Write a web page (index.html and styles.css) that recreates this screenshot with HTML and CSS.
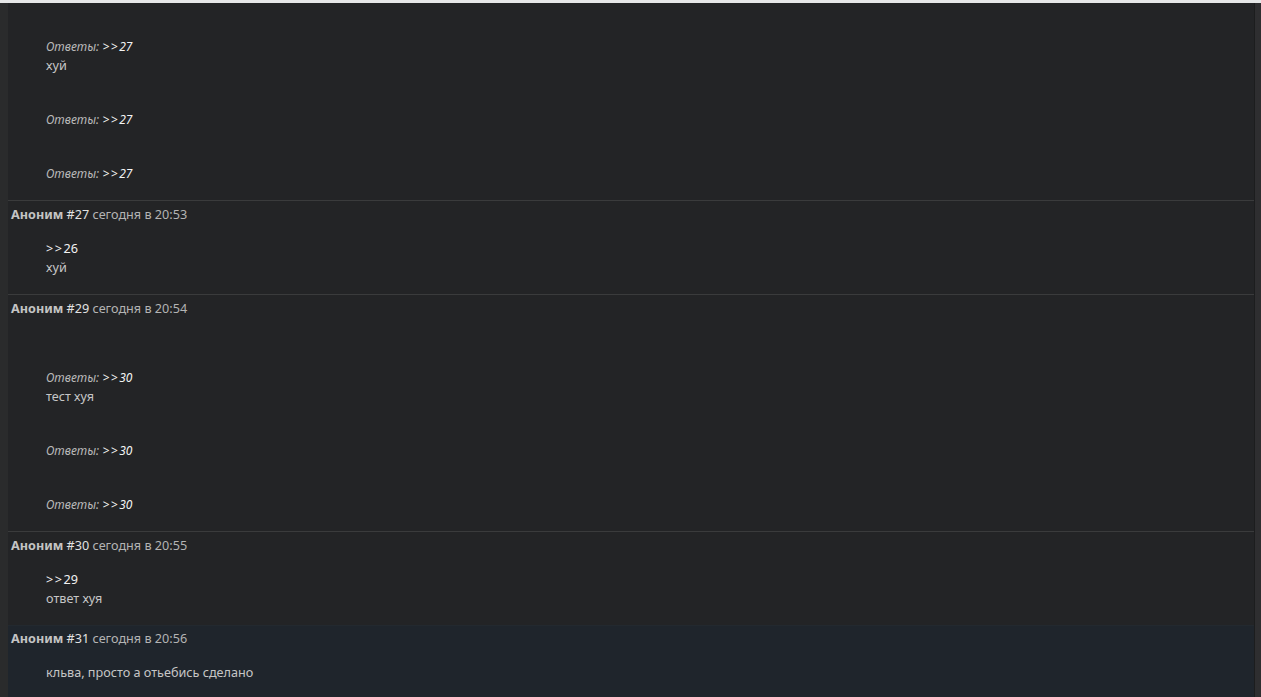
FILE: index.html
```html
<!DOCTYPE html>
<html lang="ru">
<head>
<meta charset="utf-8">
<title>Тред</title>
<link rel="stylesheet" href="styles.css">
</head>
<body>
<div class="topbar"></div>
<div class="frame">
  <div class="gutter gutter--left"></div>
  <main class="thread">
    <section class="post post--cont">
      <div class="post-body">
        <div class="reply">
          <div class="reply-refs"><span class="refs-label">Ответы:</span> <a class="ref"><span class="gt">&gt;&gt;</span>27</a></div>
          <div class="reply-text">хуй</div>
        </div>
        <div class="reply">
          <div class="reply-refs"><span class="refs-label">Ответы:</span> <a class="ref"><span class="gt">&gt;&gt;</span>27</a></div>
        </div>
        <div class="reply">
          <div class="reply-refs"><span class="refs-label">Ответы:</span> <a class="ref"><span class="gt">&gt;&gt;</span>27</a></div>
        </div>
      </div>
    </section>

    <section class="post">
      <header class="post-head"><span class="author">Аноним</span> <span class="num">#27</span> <span class="date">сегодня в 20:53</span></header>
      <div class="post-body">
        <div class="quote-link"><span class="gt">&gt;&gt;</span>26</div>
        <div class="text">хуй</div>
      </div>
    </section>

    <section class="post">
      <header class="post-head"><span class="author">Аноним</span> <span class="num">#29</span> <span class="date">сегодня в 20:54</span></header>
      <div class="post-body">
        <div class="reply">
          <div class="reply-refs"><span class="refs-label">Ответы:</span> <a class="ref"><span class="gt">&gt;&gt;</span>30</a></div>
          <div class="reply-text">тест хуя</div>
        </div>
        <div class="reply">
          <div class="reply-refs"><span class="refs-label">Ответы:</span> <a class="ref"><span class="gt">&gt;&gt;</span>30</a></div>
        </div>
        <div class="reply">
          <div class="reply-refs"><span class="refs-label">Ответы:</span> <a class="ref"><span class="gt">&gt;&gt;</span>30</a></div>
        </div>
      </div>
    </section>

    <section class="post">
      <header class="post-head"><span class="author">Аноним</span> <span class="num">#30</span> <span class="date">сегодня в 20:55</span></header>
      <div class="post-body">
        <div class="quote-link"><span class="gt">&gt;&gt;</span>29</div>
        <div class="text">ответ хуя</div>
      </div>
    </section>

    <section class="post post--highlight">
      <header class="post-head"><span class="author">Аноним</span> <span class="num">#31</span> <span class="date">сегодня в 20:56</span></header>
      <div class="post-body">
        <div class="text">кльва, просто а отьебись сделано</div>
      </div>
    </section>
  </main>
  <div class="gutter gutter--right"></div>
</div>
</body>
</html>
```
FILE: styles.css
```css
html, body {
  margin: 0;
  padding: 0;
  height: 697px;
  overflow: hidden;
  background: #232426;
}

body {
  font-family: "Noto Sans", "Open Sans", sans-serif;
  font-size: 12.65px;
  line-height: 19px;
  color: #c6c6c6;
}

.topbar {
  height: 3px;
  background: #e6e7e8;
}

.frame {
  display: flex;
  height: 694px;
  overflow: hidden;
}

.gutter {
  flex: 0 0 auto;
}

.gutter--left {
  width: 8px;
  background: #2a2b2c;
}

.gutter--right {
  width: 6px;
  background: #2e2e30;
  border-left: 1px solid #1c1d1e;
}

.thread {
  flex: 1 1 auto;
  min-width: 0;
  display: flex;
  flex-direction: column;
}

.post {
  border-top: 1px solid #3a3b3c;
  padding: 4px 0 17px;
}

.post--cont {
  border-top: 0;
  padding-top: 0;
}

.post--cont .reply:first-child {
  margin-top: 34px;
}

.post--highlight {
  flex: 1 1 auto;
  background: #1f252c;
  border-top-color: #23292f;
  padding-top: 3px;
  padding-bottom: 0;
}

.post-head {
  padding-left: 3px;
}

.author {
  font-weight: 700;
  color: #c4c4c4;
}

.num {
  color: #e2e2e2;
}

.date {
  color: #b4b4b4;
}

.post-body {
  padding: 15px 0 0 38px;
}

.post--cont .post-body {
  padding-top: 0;
}

.reply {
  margin-top: 35px;
}

.refs-label {
  font-style: italic;
  font-size: 12px;
  color: #b9b9b9;
}

.ref {
  font-style: italic;
  font-size: 12px;
  color: #f4f4f4;
}

.gt {
  letter-spacing: 1.5px;
}

.reply-text,
.text {
  color: #c6c6c6;
}

.quote-link {
  color: #f2f2f2;
}
```
